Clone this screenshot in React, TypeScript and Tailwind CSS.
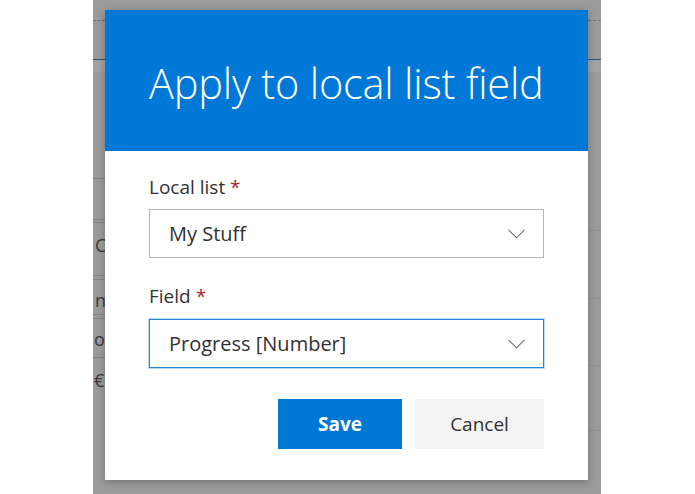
const font = { fontFamily: '"Open Sans", "Liberation Sans", sans-serif' };

const Chevron = () => (
  <svg width="17" height="10" viewBox="0 0 17 10" fill="none">
    <polyline points="0.5,0.8 8.5,8.8 16.5,0.8" stroke="#6b6b6b" strokeWidth="1.1" />
  </svg>
);

const Select = ({ value }: { value: string }) => {
  return (
    <div className="flex h-[47px] w-full items-center justify-between pl-[19px] pr-[18px] text-[20px] text-[#323130]">
      <span>{value}</span>
      <Chevron />
    </div>
  );
};

export default function App() {
  return (
    <div className="relative h-[494px] w-[695px] overflow-hidden bg-white" style={font}>
      {/* dimmed page behind the dialog */}
      <div className="ml-[93px] flex h-full w-[508px] bg-[#9b9b9b]">
        {/* left strip */}
        <div className="flex w-[12px] flex-col overflow-hidden">
          <div className="mt-[20px] h-px w-full border-t border-dashed border-[#6f6f6f]" />
          <div className="mt-[38px] h-px w-full bg-[#245582]" />
          <div className="h-[12px] w-full bg-[#a3a3a3]" />
          <div className="mt-[106px] h-px w-full bg-[#858585]" />
          <div className="mt-[40px] h-px w-full bg-[#858585]" />
          <div className="mt-[2px] h-px w-full bg-[#858585]" />
          <div className="mt-[10px] whitespace-nowrap pl-[2px] text-[18px] leading-[24px] text-[#3a3a3a]">C</div>
          <div className="mt-[18px] h-px w-full bg-[#858585]" />
          <div className="mt-[3px] h-px w-full bg-[#858585]" />
          <div className="mt-[10px] whitespace-nowrap pl-[2px] text-[18px] leading-[20px] text-[#3a3a3a]">n</div>
          <div className="mt-[4px] h-px w-full bg-[#858585]" />
          <div className="mt-[3px] h-px w-full bg-[#858585]" />
          <div className="mt-[10px] whitespace-nowrap pl-[1px] text-[18px] leading-[20px] text-[#3a3a3a]">o</div>
          <div className="mt-[8px] h-px w-full bg-[#858585]" />
          <div className="mt-[10px] whitespace-nowrap pl-[1px] text-[18px] leading-[24px] text-[#3a3a3a]">€</div>
        </div>
        <div className="flex-1" />
        {/* right strip */}
        <div className="flex w-[13px] flex-col">
          <div className="mt-[20px] h-px w-full border-t border-dashed border-[#6f6f6f]" />
          <div className="mt-[38px] h-px w-full bg-[#245582]" />
          <div className="h-[12px] w-full bg-[#a3a3a3]" />
          <div className="mt-[158px] h-px w-full bg-[#929292]" />
          <div className="mt-[67px] h-px w-full bg-[#929292]" />
          <div className="mt-[66px] h-px w-full bg-[#929292]" />
          <div className="mt-[64px] h-px w-full bg-[#929292]" />
        </div>
      </div>

      {/* dialog */}
      <div className="absolute left-[105px] top-[10px] flex h-[470px] w-[483px] flex-col bg-white shadow-[0_2px_8px_rgba(0,0,0,0.25)]">
        <div className="flex h-[141px] items-start bg-[#0078d7] pl-[44px] pt-[45px]">
          <h1 className="text-[41.5px] font-light leading-[56px] tracking-[-0.2px] text-white">Apply to local list field</h1>
        </div>
        <div className="flex flex-col px-[44px] pt-[23px]">
          <label className="text-[19px] leading-[27px] text-[#323130]">
            Local list <span className="text-[#a4262c]">*</span>
          </label>
          <div className="mt-[8px] border border-[#b5b5b5]">
            <Select value="My Stuff" />
          </div>
          <label className="mt-[25px] text-[19px] leading-[27px] text-[#323130]">
            Field <span className="text-[#a4262c]">*</span>
          </label>
          <div className="mt-[9px] border border-[#2b86d8] shadow-[0_0_0_1px_rgba(60,150,230,0.35)]">
            <Select value="Progress [Number]" />
          </div>
          <div className="mt-[31px] flex justify-end gap-[13px]">
            <button className="h-[50px] w-[124px] bg-[#0078d4] text-[19px] font-bold text-white">Save</button>
            <button className="h-[50px] w-[129px] bg-[#f3f3f3] text-[19px] text-[#323130]">Cancel</button>
          </div>
        </div>
      </div>
    </div>
  );
}
